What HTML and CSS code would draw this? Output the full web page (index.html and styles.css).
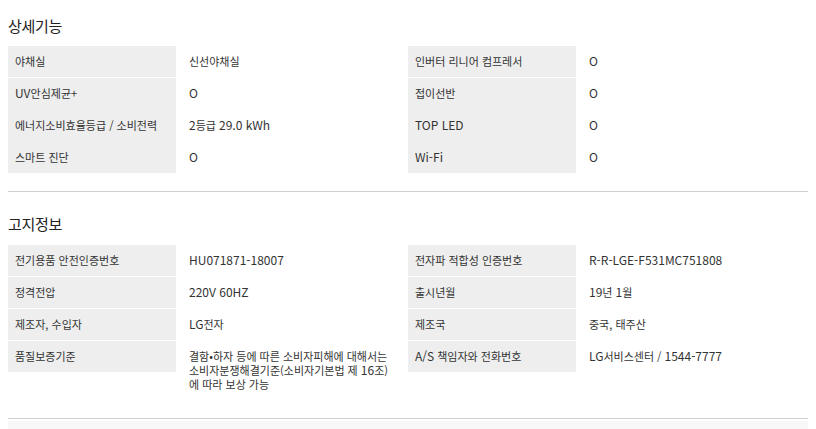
FILE: index.html
```html
<!DOCTYPE html>
<html lang="ko">
<head>
<meta charset="utf-8">
<title>상세기능</title>
<link rel="stylesheet" href="styles.css">
</head>
<body>
<div class="spec">
  <section class="spec-section spec-section--first">
    <h2 class="spec-title">상세기능</h2>
    <div class="spec-grid">
      <div class="th">야채실</div><div class="td">신선야채실</div>
      <div class="th">인버터 리니어 컴프레서</div><div class="td en">O</div>
      <div class="th"><span class="en">UV</span>안심제균+</div><div class="td en">O</div>
      <div class="th">접이선반</div><div class="td en">O</div>
      <div class="th th--joined">에너지소비효율등급 / 소비전력</div><div class="td"><span class="en">2</span>등급 <span class="en">29.0 kWh</span></div>
      <div class="th th--joined en">TOP LED</div><div class="td en">O</div>
      <div class="th th--joined">스마트 진단</div><div class="td en">O</div>
      <div class="th th--joined en">Wi-Fi</div><div class="td en">O</div>
    </div>
  </section>
  <section class="spec-section">
    <h2 class="spec-title">고지정보</h2>
    <div class="spec-grid">
      <div class="th">전기용품 안전인증번호</div><div class="td en">HU071871-18007</div>
      <div class="th">전자파 적합성 인증번호</div><div class="td en">R-R-LGE-F531MC751808</div>
      <div class="th">정격전압</div><div class="td en">220V 60HZ</div>
      <div class="th">출시년월</div><div class="td"><span class="en">19</span>년 <span class="en">1</span>월</div>
      <div class="th">제조자, 수입자</div><div class="td"><span class="en">LG</span>전자</div>
      <div class="th">제조국</div><div class="td">중국, 태주산</div>
      <div class="th">품질보증기준</div><div class="td">결함•하자 등에 따른 소비자피해에 대해서는<br>소비자분쟁해결기준(소비자기본법 제 <span class="en">16</span>조)<br>에 따라 보상 가능</div>
      <div class="th"><span class="en">A/S</span> 책임자와 전화번호</div><div class="td"><span class="en">LG</span>서비스센터 / <span class="en">1544-7777</span></div>
    </div>
  </section>
  <div class="spec-more"><div class="spec-more__bar"></div></div>
</div>
</body>
</html>
```

FILE: styles.css
```css
html, body {
  margin: 0;
  background: #fff;
}

body {
  font-family: "Noto Sans CJK KR", "Noto Sans", sans-serif;
  color: #333;
}

.spec {
  padding: 0 8px;
}

.spec-section {
  padding: 22px 0 18px;
  border-top: 1px solid #cfcfcf;
}

.spec-section--first {
  padding-top: 16px;
  border-top: none;
}

.spec-title {
  margin: 0 0 10px;
  font-size: 15px;
  font-weight: normal;
  line-height: 20px;
  letter-spacing: -0.3px;
  color: #222;
}

.spec-section:not(.spec-section--first) .spec-title {
  margin-bottom: 11px;
}

.spec-grid {
  display: grid;
  grid-template-columns: 168px 232px 168px 232px;
  font-size: 11px;
  line-height: 14px;
}

.en {
  font-size: 12px;
}

.th,
.td {
  box-sizing: border-box;
  border-top: 1px solid #fff;
}

.spec-grid > :nth-child(-n+4) {
  border-top: 0;
}

.th {
  align-self: start;
  height: 32px;
  padding: 8px 7px 9px;
  background: #eee;
}

.spec-grid > .th:nth-child(-n+4) {
  height: 31px;
}

.th--joined {
  border-top-color: #eee;
}

.td {
  padding: 8px 4px 9px 13px;
}

.spec-more {
  border-top: 1px solid #cfcfcf;
  padding-top: 2px;
}

.spec-more__bar {
  height: 20px;
  background: #f8f8f8;
}
```
